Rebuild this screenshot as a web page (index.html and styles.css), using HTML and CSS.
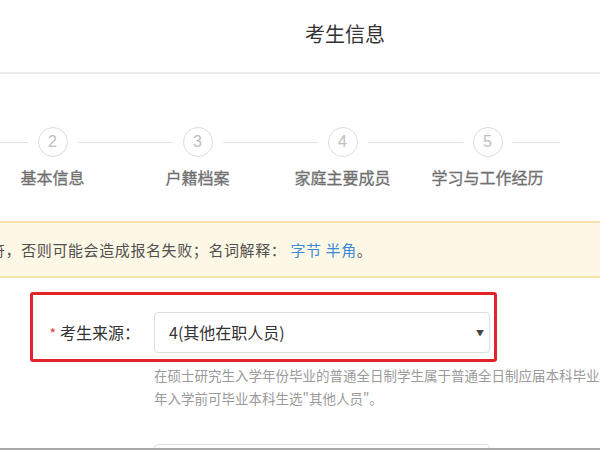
FILE: index.html
```html
<!DOCTYPE html>
<html lang="zh-CN">
<head>
<meta charset="utf-8">
<title>考生信息</title>
<link rel="stylesheet" href="styles.css">
</head>
<body>
<div class="viewport">
  <header class="header">
    <h1 class="title">考生信息</h1>
  </header>

  <div class="steps">
    <div class="step">
      <div class="step-track"><span class="track-line"></span><span class="circle">2</span><span class="track-line"></span></div>
      <div class="step-label">基本信息</div>
    </div>
    <div class="step">
      <div class="step-track"><span class="track-line"></span><span class="circle">3</span><span class="track-line"></span></div>
      <div class="step-label">户籍档案</div>
    </div>
    <div class="step">
      <div class="step-track"><span class="track-line"></span><span class="circle">4</span><span class="track-line"></span></div>
      <div class="step-label">家庭主要成员</div>
    </div>
    <div class="step">
      <div class="step-track"><span class="track-line"></span><span class="circle">5</span><span class="track-line"></span></div>
      <div class="step-label">学习与工作经历</div>
    </div>
  </div>

  <div class="notice">
    <p class="notice-text">符，否则可能会造成报名失败；名词解释： <a class="link" href="#">字节</a> <a class="link" href="#">半角</a>。</p>
  </div>

  <div class="form">
    <div class="field-row highlight">
      <label class="field-label"><span class="required">*</span>考生来源：</label>
      <div class="select">
        <span class="select-value">4(其他在职人员)</span>
        <span class="select-arrow">▼</span>
      </div>
    </div>
    <div class="help">
      <p class="help-line">在硕士研究生入学年份毕业的普通全日制学生属于普通全日制应届本科毕业</p>
      <p class="help-line">年入学前可毕业本科生选"其他人员"。</p>
    </div>
    <div class="field-row next-row">
      <div class="select select-next"></div>
    </div>
  </div>
</div>
</body>
</html>
```

FILE: styles.css
```css
* { box-sizing: border-box; }

html, body {
  margin: 0;
  padding: 0;
  background: #fff;
}

body {
  font-family: "Noto Sans CJK SC", "Noto Sans", "Liberation Sans", sans-serif;
  color: #333;
}

.viewport {
  width: 600px;
  height: 450px;
  overflow: hidden;
  border-bottom: 2px solid #a9a9a9;
}

.header {
  height: 74px;
  border-bottom: 2px solid #ebebeb;
  display: flex;
  align-items: center;
  justify-content: center;
  padding-left: 90px;
  padding-bottom: 4px;
}

.title {
  margin: 0;
  font-size: 20px;
  font-weight: normal;
  color: #333;
  line-height: 1;
}

.steps {
  display: flex;
  margin-left: -20px;
  padding-top: 53px;
  width: 700px;
}

.step {
  width: 145px;
  flex: none;
  display: flex;
  flex-direction: column;
  align-items: center;
}

.step-track {
  width: 100%;
  display: flex;
  align-items: center;
  gap: 10px;
}

.track-line {
  flex: 1;
  height: 1px;
  background: #e2e2e2;
}

.circle {
  width: 30px;
  height: 30px;
  flex: none;
  border: 1.5px solid #dcdcdc;
  border-radius: 50%;
  display: flex;
  align-items: center;
  justify-content: center;
  font-family: "Liberation Sans", sans-serif;
  font-size: 16px;
  color: #bdbdbd;
}

.step-label {
  margin-top: 10px;
  font-size: 16px;
  line-height: 20px;
  color: #707070;
  white-space: nowrap;
  -webkit-text-stroke: 0.3px #707070;
}

.notice {
  margin-top: 34px;
  height: 57px;
  background: #fdf8e5;
  border-top: 2px solid #f7e3aa;
  border-bottom: 2px solid #f7e3aa;
  display: flex;
  align-items: center;
}

.notice-text {
  margin: 0 0 0 -10px;
  font-size: 15px;
  letter-spacing: 0.6px;
  color: #505050;
  white-space: nowrap;
}

.link {
  color: #3a8ad8;
  text-decoration: none;
}

.form {
  padding-top: 14px;
}

.field-row {
  display: flex;
  align-items: center;
}

.highlight {
  margin-left: 30px;
  width: 467px;
  height: 70px;
  border: 3px solid #e3232a;
  border-radius: 3px;
  padding-top: 10px;
}

.field-label {
  width: 121px;
  flex: none;
  text-align: right;
  padding-right: 14px;
  font-size: 16px;
  color: #333;
  white-space: nowrap;
}

.required {
  color: #e5413b;
  font-size: 14px;
  margin-right: 4px;
}

.select {
  width: 336px;
  height: 41px;
  border: 1px solid #dedede;
  border-radius: 4px;
  display: flex;
  align-items: center;
  justify-content: space-between;
  padding: 0 5px 0 14px;
  background: #fff;
}

.select-value {
  font-size: 16px;
  color: #333;
}

.select-arrow {
  font-size: 8px;
  color: #444;
}

.help {
  margin-left: 154px;
  padding-top: 2px;
}

.help-line {
  margin: 0;
  font-size: 13.5px;
  line-height: 23px;
  color: #9a9a9a;
  white-space: nowrap;
}

.next-row {
  margin-left: 154px;
  padding-top: 34px;
}

.select-next {
  height: 41px;
}
```
